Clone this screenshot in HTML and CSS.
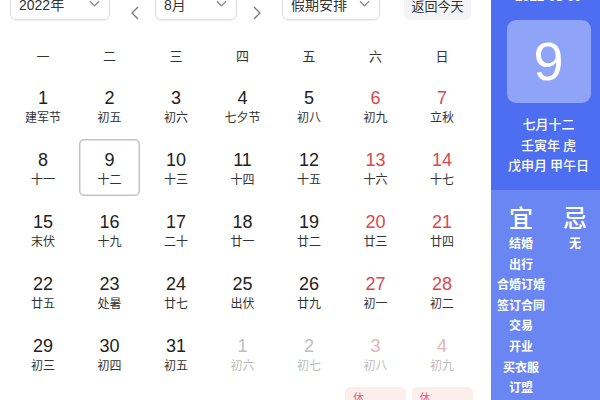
FILE: index.html
```html
<!DOCTYPE html>
<html lang="zh-CN">
<head>
<meta charset="utf-8">
<link rel="stylesheet" href="styles.css">
</head>
<body>
<div class="app">
  <div class="main">
    <div class="controls">
      <div class="select year"><span>2022年</span><svg class="chev" viewBox="0 0 12 7"><polyline points="1,1 6,6 11,1"/></svg></div>
      <svg class="arrow prev" viewBox="0 0 8 14"><polyline points="7,1 1,7 7,13"/></svg>
      <div class="select month"><span>8月</span><svg class="chev" viewBox="0 0 12 7"><polyline points="1,1 6,6 11,1"/></svg></div>
      <svg class="arrow next" viewBox="0 0 8 14"><polyline points="1,1 7,7 1,13"/></svg>
      <div class="select holiday"><span>假期安排</span><svg class="chev" viewBox="0 0 12 7"><polyline points="1,1 6,6 11,1"/></svg></div>
      <div class="today-btn">返回今天</div>
    </div>
    <div class="weekdays">
      <div>一</div><div>二</div><div>三</div><div>四</div><div>五</div><div>六</div><div>日</div>
    </div>
    <div class="grid">
      <div class="cell"><b>1</b><i>建军节</i></div>
      <div class="cell"><b>2</b><i>初五</i></div>
      <div class="cell"><b>3</b><i>初六</i></div>
      <div class="cell"><b>4</b><i>七夕节</i></div>
      <div class="cell"><b>5</b><i>初八</i></div>
      <div class="cell we"><b>6</b><i>初九</i></div>
      <div class="cell we"><b>7</b><i>立秋</i></div>

      <div class="cell"><b>8</b><i>十一</i></div>
      <div class="cell today"><b>9</b><i>十二</i></div>
      <div class="cell"><b>10</b><i>十三</i></div>
      <div class="cell"><b>11</b><i>十四</i></div>
      <div class="cell"><b>12</b><i>十五</i></div>
      <div class="cell we"><b>13</b><i>十六</i></div>
      <div class="cell we"><b>14</b><i>十七</i></div>

      <div class="cell"><b>15</b><i>末伏</i></div>
      <div class="cell"><b>16</b><i>十九</i></div>
      <div class="cell"><b>17</b><i>二十</i></div>
      <div class="cell"><b>18</b><i>廿一</i></div>
      <div class="cell"><b>19</b><i>廿二</i></div>
      <div class="cell we"><b>20</b><i>廿三</i></div>
      <div class="cell we"><b>21</b><i>廿四</i></div>

      <div class="cell"><b>22</b><i>廿五</i></div>
      <div class="cell"><b>23</b><i>处暑</i></div>
      <div class="cell"><b>24</b><i>廿七</i></div>
      <div class="cell"><b>25</b><i>出伏</i></div>
      <div class="cell"><b>26</b><i>廿九</i></div>
      <div class="cell we"><b>27</b><i>初一</i></div>
      <div class="cell we"><b>28</b><i>初二</i></div>

      <div class="cell"><b>29</b><i>初三</i></div>
      <div class="cell"><b>30</b><i>初四</i></div>
      <div class="cell"><b>31</b><i>初五</i></div>
      <div class="cell other"><b>1</b><i>初六</i></div>
      <div class="cell other"><b>2</b><i>初七</i></div>
      <div class="cell other we"><b>3</b><i>初八</i></div>
      <div class="cell other we"><b>4</b><i>初九</i></div>

      <div class="cell other"><b>5</b><i>初十</i></div>
      <div class="cell other"><b>6</b><i>十一</i></div>
      <div class="cell other"><b>7</b><i>白露</i></div>
      <div class="cell other"><b>8</b><i>十三</i></div>
      <div class="cell other"><b>9</b><i>十四</i></div>
      <div class="cell other we rest"><span class="tag">休</span><b>10</b><i>中秋节</i></div>
      <div class="cell other we rest"><span class="tag">休</span><b>11</b><i>十六</i></div>
    </div>
  </div>
  <div class="side">
    <div class="side-top">
      <div class="side-date">2022-08-09</div>
      <div class="big-day">9</div>
      <div class="lunar">
        <div>七月十二</div>
        <div>壬寅年 虎</div>
        <div>戊申月 甲午日</div>
      </div>
    </div>
    <div class="side-bottom">
      <div class="col yi">
        <div class="head">宜</div>
        <div>结婚</div>
        <div>出行</div>
        <div>合婚订婚</div>
        <div>签订合同</div>
        <div>交易</div>
        <div>开业</div>
        <div>买衣服</div>
        <div>订盟</div>
      </div>
      <div class="col ji">
        <div class="head">忌</div>
        <div>无</div>
      </div>
    </div>
  </div>
</div>
</body>
</html>
```

FILE: styles.css
```css
html, body {
  margin: 0;
  padding: 0;
  background: #fff;
}
body {
  font-family: "Liberation Sans", "Noto Sans CJK SC", sans-serif;
  color: #333;
}
.app {
  display: flex;
  width: 600px;
  height: 400px;
  overflow: hidden;
}
.main {
  width: 491px;
  flex: none;
}
.controls {
  display: flex;
  align-items: center;
  height: 30px;
  margin-top: -10px;
}
.select {
  box-sizing: border-box;
  height: 30px;
  border: 1px solid #dedede;
  border-radius: 6px;
  display: flex;
  align-items: flex-end;
  padding: 0 0 4px 8px;
  font-size: 14px;
  line-height: 20px;
  color: #333;
  box-shadow: 0 1px 2px rgba(0,0,0,0.06);
}
.select span { flex: none; }
.chev {
  width: 11px;
  height: 7px;
  margin: 0 9px 8px auto;
  fill: none;
  stroke: #8a8a8a;
  stroke-width: 1.3;
}
.year { margin-left: 10px; width: 100px; }
.month { margin-left: 16px; width: 82px; }
.holiday { margin-left: 21px; width: 98px; }
.arrow {
  width: 8px;
  height: 14px;
  margin-top: 16px;
  fill: none;
  stroke: #777;
  stroke-width: 1.3;
}
.prev { margin-left: 21px; }
.next { margin-left: 16px; }
.today-btn {
  margin-left: 24px;
  width: 67px;
  height: 30px;
  box-sizing: border-box;
  background: #f4f4f6;
  border-radius: 6px;
  font-size: 13px;
  line-height: 20px;
  padding-top: 7px;
  text-align: center;
  color: #333;
}
.weekdays, .grid {
  display: grid;
  grid-template-columns: repeat(7, 61px);
  column-gap: 5.5px;
  padding-left: 12.5px;
}
.weekdays {
  margin-top: 27px;
  height: 20px;
  line-height: 20px;
  font-size: 13px;
  text-align: center;
  color: #333;
}
.grid {
  margin-top: 10px;
  grid-auto-rows: 57px;
  row-gap: 5px;
}
.cell {
  position: relative;
  box-sizing: border-box;
  display: flex;
  flex-direction: column;
  align-items: center;
  padding-top: 10px;
  border-radius: 5px;
}
.cell b {
  font-weight: normal;
  font-size: 18px;
  line-height: 22px;
  color: #222;
}
.cell i {
  font-style: normal;
  font-size: 12px;
  line-height: 18px;
  color: #333;
}
.cell.we b { color: #d9484d; }
.cell.other b, .cell.other i { color: #bdbdbd; }
.cell.other.we b { color: #e6b3b5; }
.today {
  box-shadow: inset 0 0 0 1.5px #c3c3c3;
}
.rest {
  background: #fdeeee;
}
.tag {
  position: absolute;
  left: 8px;
  top: 4px;
  font-size: 11px;
  line-height: 14px;
  color: #e46a6d;
}
.side {
  width: 115px;
  flex: none;
  display: flex;
  flex-direction: column;
  color: #fff;
  font-family: "Noto Sans CJK SC", "Liberation Sans", sans-serif;
}
.side-top {
  background: #4e6ef2;
  height: 190px;
  display: flex;
  flex-direction: column;
  align-items: center;
}
.side-date {
  margin-top: -13px;
  height: 20px;
  line-height: 20px;
  font-size: 13px;
  font-weight: bold;
  font-family: "Liberation Sans", sans-serif;
}
.big-day {
  margin-top: 13px;
  width: 84px;
  height: 83px;
  border-radius: 9px;
  background: #8fa3f7;
  text-align: center;
  line-height: 83px;
  font-size: 54px;
  font-family: "Liberation Sans", sans-serif;
}
.lunar {
  margin-top: 11px;
  text-align: center;
  font-size: 13px;
  line-height: 20.5px;
  font-weight: 500;
}
.side-bottom {
  flex: 1;
  background: #6a86f3;
  display: flex;
  padding-top: 13px;
}
.col {
  text-align: center;
  font-size: 12px;
  line-height: 20.6px;
  font-weight: bold;
}
.col .head {
  font-size: 24px;
  line-height: 28px;
  font-weight: 500;
  margin-bottom: 2px;
}
.yi { width: 60px; }
.ji { width: 48px; }
```
